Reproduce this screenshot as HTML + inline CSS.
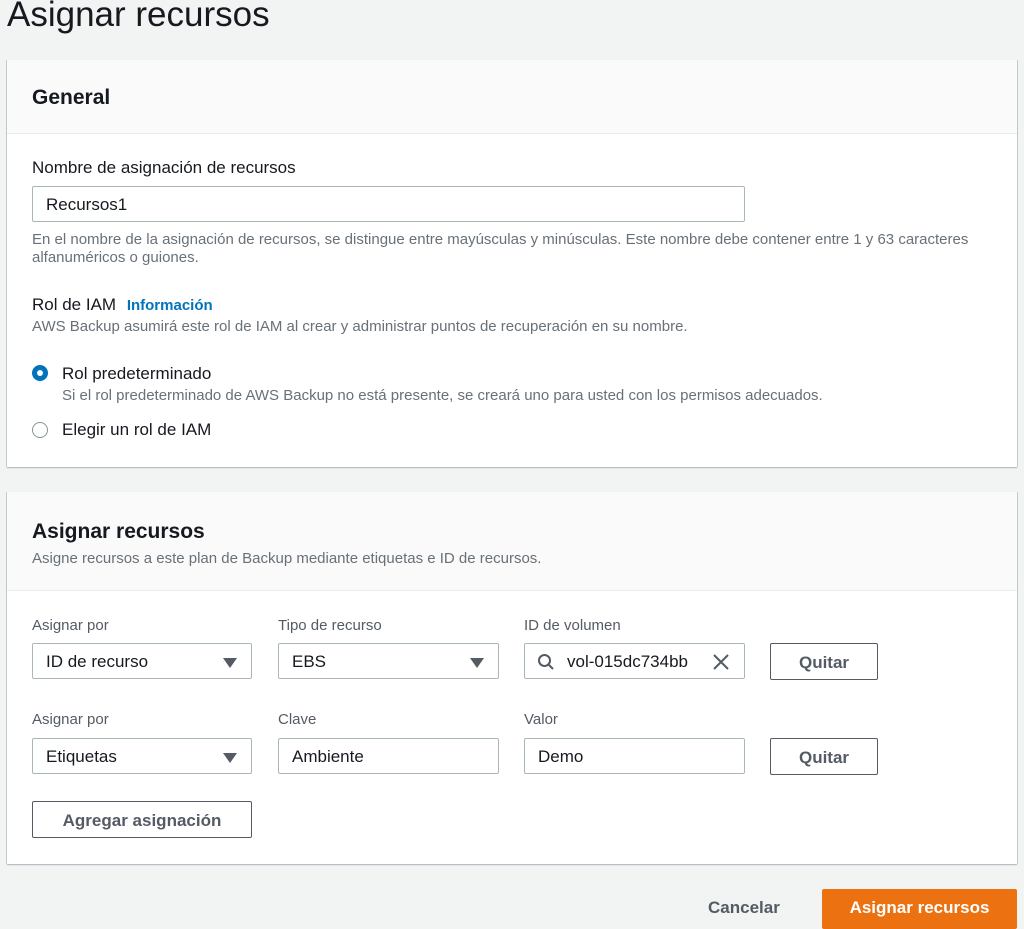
<!DOCTYPE html>
<html><head><meta charset="utf-8"><style>
*{box-sizing:border-box;margin:0;padding:0}
body{width:1024px;height:922px;background:#f2f3f3;font-family:"Liberation Sans",sans-serif;color:#16191f;position:relative;overflow:hidden}
.abs{position:absolute}
h1{position:absolute;left:7px;top:-5px;font-size:35px;font-weight:normal;color:#16191f}
.panel{position:absolute;left:7px;width:1010px;background:#fff;box-shadow:0 1px 1px rgba(0,31,63,.3),1px 0 0 rgba(0,31,63,.15),-1px 0 0 rgba(0,31,63,.15)}
.hd{background:#fafafa;border-bottom:1px solid #eaeded}
.t{position:absolute;white-space:nowrap}
.inp{position:absolute;height:36px;border:1px solid #aab7b8;border-radius:2px;background:#fff;font-size:17px;padding:0 13px;line-height:36px;white-space:nowrap}
.lbl{position:absolute;font-size:15px;color:#545b64}
.btn{position:absolute;height:37px;border:1px solid #545b64;border-radius:2px;background:#fff;font-weight:bold;font-size:17px;color:#545b64;text-align:center;line-height:37px}
.arr{position:absolute;right:14px;top:14px;width:0;height:0;border-left:7px solid transparent;border-right:7px solid transparent;border-top:10px solid #545b64}
.help{font-size:15px;color:#687078}
</style></head><body>
<h1>Asignar recursos</h1>
<div class="panel" style="top:60px;height:407px">
 <div class="hd" style="height:74px"></div>
 <div class="t" style="left:25px;top:26px;font-size:21px;font-weight:bold">General</div>
 <div class="t" style="left:25px;top:98px;font-size:17px">Nombre de asignación de recursos</div>
 <div class="inp" style="left:25px;top:126px;width:713px">Recursos1</div>
 <div class="t help" style="left:25px;top:171px;line-height:18px">En el nombre de la asignación de recursos, se distingue entre mayúsculas y minúsculas. Este nombre debe contener entre 1 y 63 caracteres<br>alfanuméricos o guiones.</div>
 <div class="t" style="left:25px;top:235px;font-size:17px">Rol de IAM <span style="color:#0073bb;font-weight:bold;font-size:15px;margin-left:6px">Información</span></div>
 <div class="t help" style="left:25px;top:258px">AWS Backup asumirá este rol de IAM al crear y administrar puntos de recuperación en su nombre.</div>
 <div class="abs" style="left:25px;top:305px;width:16px;height:16px;border-radius:50%;background:#0073bb"><div class="abs" style="left:5px;top:5px;width:6px;height:6px;border-radius:50%;background:#fff"></div></div>
 <div class="t" style="left:55px;top:304px;font-size:17px">Rol predeterminado</div>
 <div class="t help" style="left:55px;top:327px">Si el rol predeterminado de AWS Backup no está presente, se creará uno para usted con los permisos adecuados.</div>
 <div class="abs" style="left:25px;top:362px;width:16px;height:16px;border-radius:50%;border:1px solid #879596"></div>
 <div class="t" style="left:55px;top:360px;font-size:17px">Elegir un rol de IAM</div>
</div>
<div class="panel" style="top:492px;height:372px">
 <div class="hd" style="height:99px"></div>
 <div class="t" style="left:25px;top:28px;font-size:21px;font-weight:bold">Asignar recursos</div>
 <div class="t help" style="left:25px;top:58px">Asigne recursos a este plan de Backup mediante etiquetas e ID de recursos.</div>
</div>
<div class="lbl" style="left:32px;top:617px">Asignar por</div>
<div class="lbl" style="left:278px;top:617px">Tipo de recurso</div>
<div class="lbl" style="left:524px;top:617px">ID de volumen</div>
<div class="inp" style="left:32px;top:643px;width:220px">ID de recurso<div class="arr"></div></div>
<div class="inp" style="left:278px;top:643px;width:221px">EBS<div class="arr"></div></div>
<div class="inp" style="left:524px;top:643px;width:221px;padding-left:42px">vol-015dc734bb
 <svg class="abs" style="left:12px;top:9px" width="18" height="18" viewBox="0 0 18 18"><circle cx="7.5" cy="7.5" r="5.5" fill="none" stroke="#545b64" stroke-width="2"/><path d="M11.5 11.5L16 16" stroke="#545b64" stroke-width="2"/></svg>
 <svg class="abs" style="left:188px;top:10px" width="16" height="16" viewBox="0 0 16 16"><path d="M1 1L15 15M15 1L1 15" stroke="#545b64" stroke-width="2"/></svg></div>
<div class="btn" style="left:770px;top:643px;width:108px">Quitar</div>
<div class="lbl" style="left:32px;top:711px">Asignar por</div>
<div class="lbl" style="left:278px;top:711px">Clave</div>
<div class="lbl" style="left:524px;top:711px">Valor</div>
<div class="inp" style="left:32px;top:738px;width:220px">Etiquetas<div class="arr"></div></div>
<div class="inp" style="left:278px;top:738px;width:221px">Ambiente</div>
<div class="inp" style="left:524px;top:738px;width:221px">Demo</div>
<div class="btn" style="left:770px;top:738px;width:108px">Quitar</div>
<div class="btn" style="left:32px;top:801px;width:220px">Agregar asignación</div>
<div class="t" style="left:708px;top:898px;font-size:17px;font-weight:bold;color:#545b64">Cancelar</div>
<div class="abs" style="left:822px;top:889px;width:195px;height:40px;background:#ec7211;color:#fff;font-weight:bold;font-size:17px;text-align:center;line-height:38px;border-radius:2px">Asignar recursos</div>
</body></html>
